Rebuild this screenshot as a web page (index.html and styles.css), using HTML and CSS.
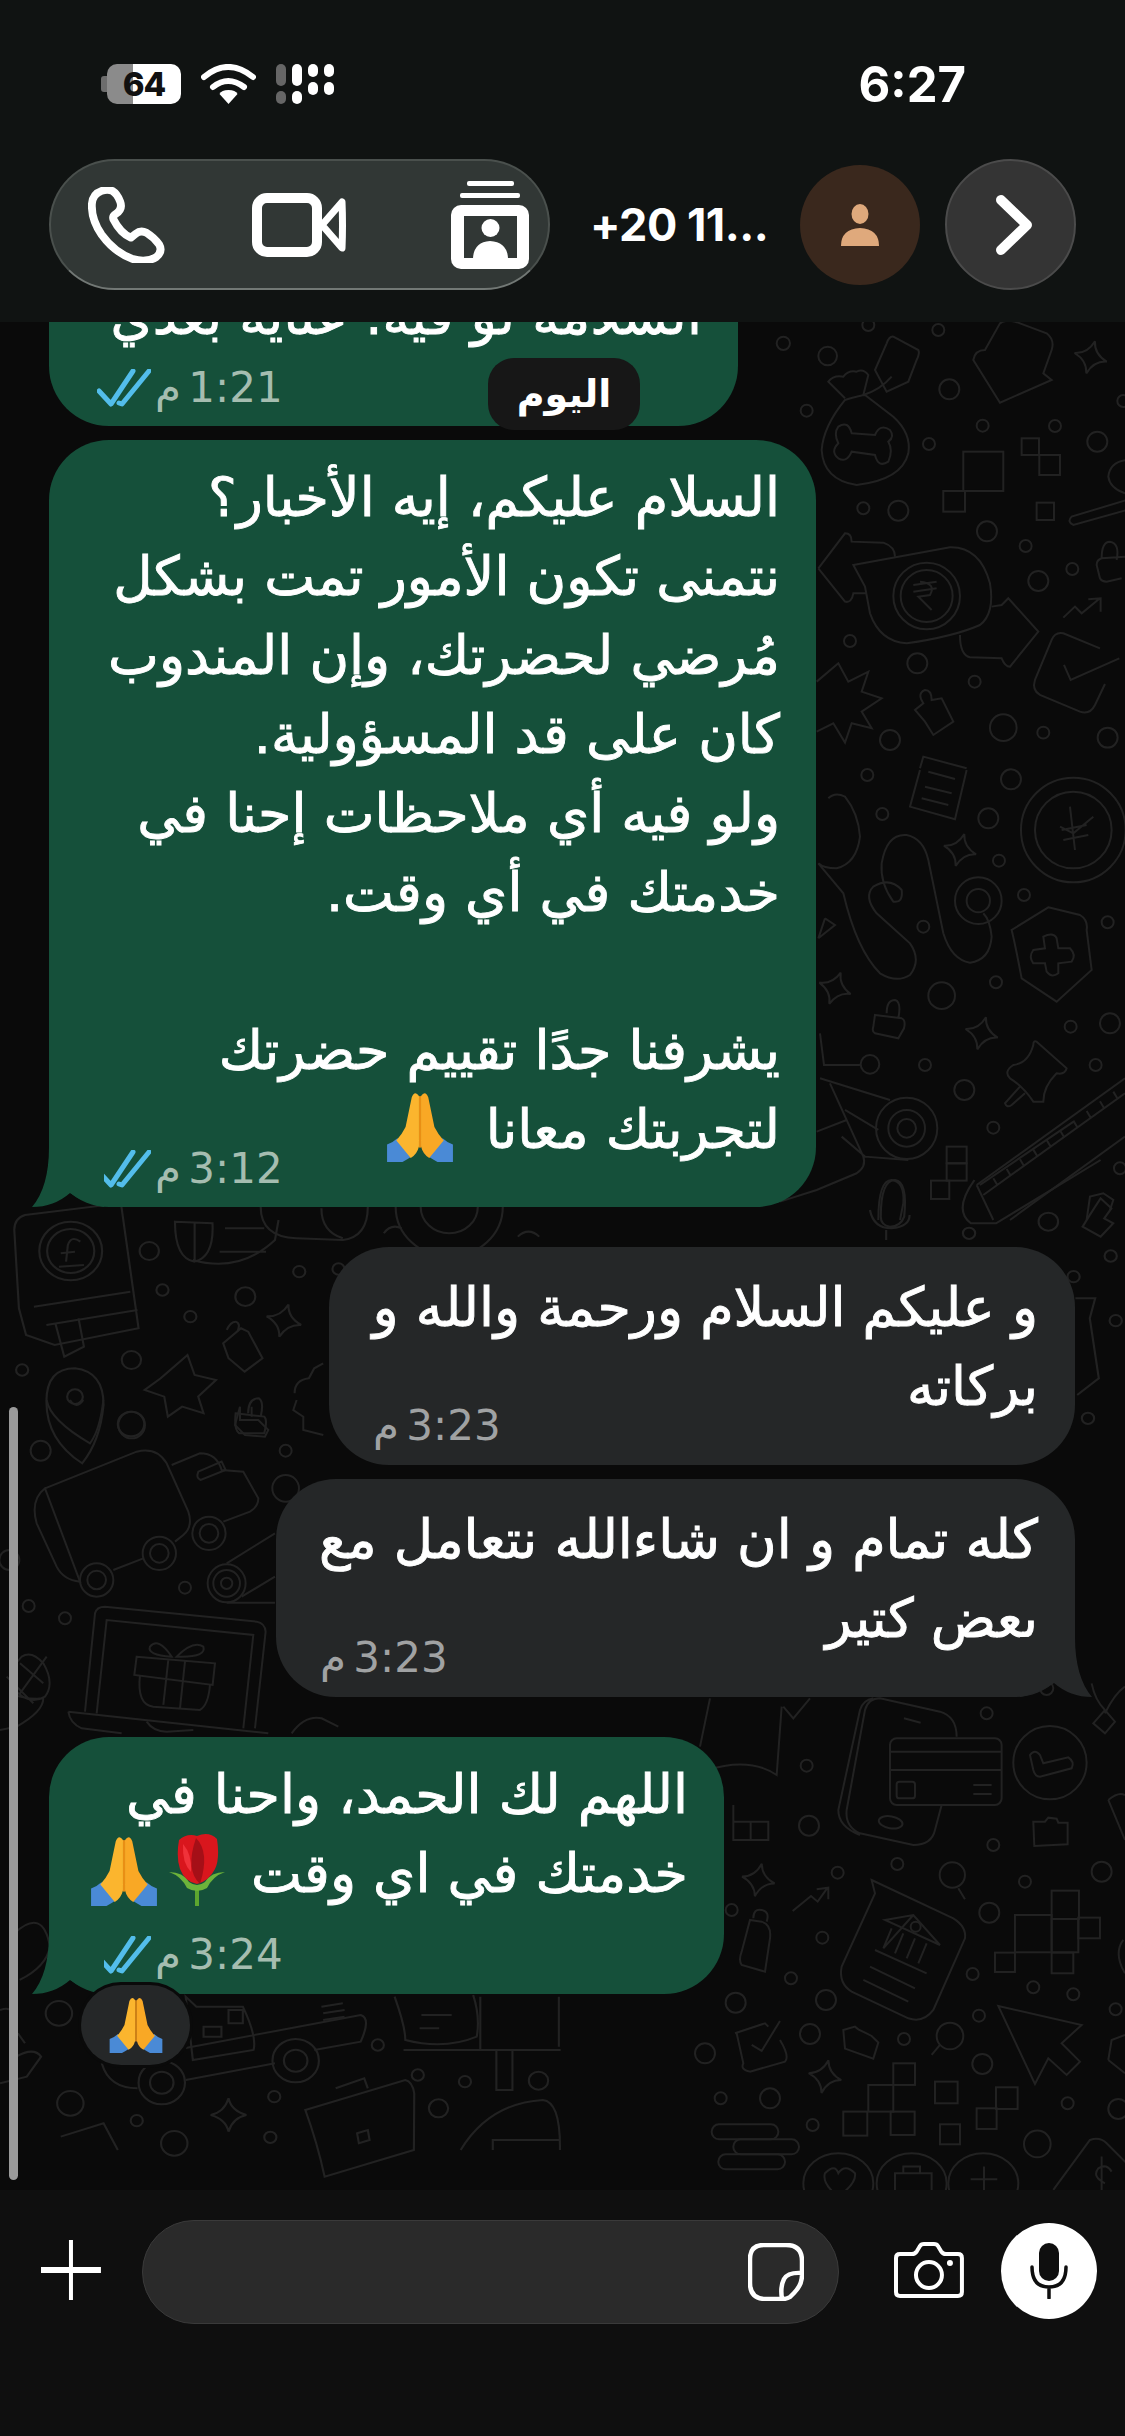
FILE: index.html
```html
<!doctype html>
<html lang="ar">
  <head>
    <meta charset="UTF-8" />
    <meta name="viewport" content="width=device-width, initial-scale=1.0" />
    <title>WhatsApp chat</title>
    <link rel="stylesheet" href="styles.css">
  </head>
  <body>
    <svg class="defs" width="0" height="0">
      <defs>
        <symbol id="pray" viewBox="0 0 64 68">
          <path fill="#4a8ad6" d="M0 68V51q6-2 10-6l15 17q-6 4-10 6z" />
          <path fill="#4a8ad6" d="M64 68V51q-6-2-10-6L39 62q6 4 10 6z" />
          <path fill="#fbb52e" d="M31 4q-4-6-7 1l-6 29q-4 8-9 13l14 17q6-3 8-11z" />
          <path fill="#f9a825" d="M33 4q4-6 7 1l6 29q4 8 9 13L41 64q-6-3-8-11z" />
          <path fill="#e98f14" d="M31 4h2v50h-2z" />
        </symbol>
        <symbol id="rose" viewBox="0 0 56 72">
          <path fill="#5da52f" d="M26 52h4v20h-4z" />
          <path fill="#6cb33a" d="M0 38q14 0 20 10 8 6 16 0 6-10 20-10-12 4-18 16-10 6-20 0Q12 42 0 38z" />
          <path fill="#d9161d" d="M10 6q8-7 18-4 12-5 20 3 3 20-2 30-6 12-18 15-12-2-17-15-4-12-1-29z" />
          <path fill="#a50f17" d="M27 4q14 14 4 46-15-14-4-46z" />
          <path fill="#f0323a" d="M14 10q9 10 8 28-9-9-8-28z" />
        </symbol>
        <symbol id="ticks" viewBox="0 0 54 38">
          <path fill="none" stroke="#53bdeb" stroke-width="5" stroke-linecap="round" stroke-linejoin="round" d="M2 22l12 13L36 2M22 34l3 1L52 2" />
        </symbol>
        <path id="spark" d="M0-50Q8-12 50 0 12 8 0 50-8 12-50 0-12-8 0-50z" />
      </defs>
    </svg>

    <header class="top-bar">
      <div class="status-row">
        <div class="status-icons">
          <div class="battery"><span class="battery-level">64</span></div>
          <svg class="wifi" viewBox="0 0 55 40">
            <path fill="none" stroke="#fff" stroke-width="6" stroke-linecap="round" d="M3 13q24-20 49 0M12 23q15-12 31 0" />
            <path fill="#fff" d="M27.500 26q7 0 9 4l-9 10-9-10q2-4 9-4z" />
          </svg>
          <div class="signal">
            <span class="signal-col"><i class="tall dim"></i><i class="dim"></i></span>
            <span class="signal-col"><i class="tall"></i><i></i></span>
            <span class="signal-col"><i></i><i></i></span>
            <span class="signal-col"><i></i><i></i></span>
          </div>
        </div>
        <div class="clock">6:27</div>
      </div>

      <div class="nav-row">
        <div class="call-pill">
          <svg class="icon-phone" viewBox="0 0 80 78">
            <path fill="none" stroke="#fff" stroke-width="8" stroke-linejoin="round" d="M14 4Q5 7 4 17q-1 16 10 32 13 18 32 25 14 4 24-2 7-6 3-13-5-7-13-12-6-3-11 1l-5 4Q33 47 26 33q-1-3 2-5 8-5 5-13-3-8-8-11-5-2-11 0z" />
          </svg>
          <svg class="icon-video" viewBox="0 0 94 64">
            <rect x="5" y="5" width="60" height="54" rx="10" fill="none" stroke="#fff" stroke-width="10" />
            <path fill="none" stroke="#fff" stroke-width="7" stroke-linejoin="round" d="M70 32 90 9q1 23 0 46z" />
          </svg>
          <svg class="icon-contact" viewBox="0 0 78 88">
            <rect x="16" y="0" width="47" height="5" rx="2" fill="#fff" />
            <rect x="9" y="12" width="60" height="5" rx="2" fill="#fff" />
            <rect x="0" y="24" width="78" height="64" rx="10" fill="#fff" />
            <rect x="13" y="35" width="53" height="42" fill="#313735" />
            <circle cx="39.500" cy="47" r="9" fill="#fff" />
            <path fill="#fff" d="M22 77q1-16 17-17 17 1 18 17z" />
          </svg>
        </div>
        <div class="contact-name">+20 11...</div>
        <div class="avatar">
          <svg viewBox="0 0 38 42" class="avatar-person">
            <ellipse cx="19" cy="10" rx="8.500" ry="10" fill="#dfa97c" />
            <path fill="#dfa97c" d="M0 42q0-17 19-18 19 1 19 18z" />
          </svg>
        </div>
        <div class="round-btn">
          <svg viewBox="0 0 40 62" class="chevron">
            <path fill="none" stroke="#fff" stroke-width="10" stroke-linecap="round" stroke-linejoin="round" d="M7 6l26 25L7 56" />
          </svg>
        </div>
      </div>
    </header>

    <main class="chat">
      <svg class="wallpaper" viewBox="0 322 1125 1868" fill="none" stroke="#222" stroke-width="2">
        <!-- top right -->
        <g transform="translate(780 320) scale(.3333)" stroke-width="6">
          <circle cx="143" cy="108" r="28" /><circle cx="80" cy="272" r="18" /><circle cx="508" cy="208" r="30" /><circle cx="475" cy="30" r="18" /><circle cx="608" cy="317" r="18" /><circle cx="825" cy="318" r="18" /><circle cx="952" cy="365" r="30" /><circle cx="447" cy="372" r="18" /><circle cx="250" cy="565" r="18" /><circle cx="355" cy="572" r="30" /><circle cx="621" cy="634" r="30" /><circle cx="737" cy="678" r="18" /><circle cx="877" cy="747" r="18" /><circle cx="775" cy="783" r="30" /><circle cx="210" cy="963" r="18" /><circle cx="412" cy="1030" r="30" /><circle cx="584" cy="1085" r="18" /><circle cx="670" cy="1223" r="40" /><circle cx="790" cy="1238" r="18" /><circle cx="983" cy="1253" r="30" /><circle cx="330" cy="1260" r="30" /><circle cx="265" cy="15" r="18" /><circle cx="1030" cy="243" r="18" /><circle cx="10" cy="70" r="20" />
          <path d="M340 50l75 40q5 10-5 30l-25 65-65 30-35-65 35-80q8-22 20-20zM335 170q-35 40-85 55" />
          <path d="M195 240q50-15 60-15l85 65q55 50 45 110-20 80-155 95-100-15-105-105 5-70 70-150zM195 235l-50-50q15-20 45-15 15-20 40-15 20-10 35 10l-15 60" />
          <path d="M215 340l70 5q15-35 45-15 15 20-5 35 15 25 0 60-30 20-40-20l-70-10q-15 35-40 20-25-20 0-45-15-30 0-50 30-20 40 20z" />
          <path d="M660 10q20-15 60 0l80 30q25 20 15 50l-25 70 25 20-155 68-80-128q5-30 35-30z" />
          <use href="#spark" transform="translate(932 112) rotate(15)" />
          <rect x="550" y="395" width="120" height="118" /><rect x="490" y="513" width="65" height="62" /><rect x="725" y="355" width="52" height="50" /><rect x="778" y="405" width="62" height="60" /><rect x="770" y="548" width="52" height="52" />
          <path d="M1040 420q-50 5-55 50 5 35 50 50M1040 540l-165 50q-15 15 5 25l160-45" />
          <path d="M965 715q0-50 25-50 30 5 20 55M1035 710l-70 5q-15 5-15 20l10 40q5 10 20 10l45-10" />
          <path d="M220 735l290-53q90-2 120 108 15 90-30 125-80 35-220 55-80-5-110-90l-15-80z" />
          <circle cx="440" cy="828" r="100" /><circle cx="440" cy="828" r="78" />
          <path d="M400 795l70-10M400 815l70-10M420 785q50 5 30 40l-35 5 40 40" />
          <path d="M115 745l80-105q20 0 20 25l95 3q35 12 35 42M115 745l80 100q20 5 25-25h40" />
          <path d="M635 860l30-5 20-20 90 100-85 105q-15 0-25-25l-95-3q-30-7-30-67" />
          <path d="M850 893l35-33 20 20 55-45M925 838l37-3v40" />
          <path d="M960 985l-110-45q-25-5-35 20l-50 120q-10 30 15 45l120 50q30 10 45-20l30-63M852 1035l20 45 146-65" />
          <path d="M110 1085l65-55 30 55 60-30-20 60 60 20-60 40 30 50-60-15-20 58-35-58-50 25" />
          <path d="M430 1150q-20-30 5-40 20 0 20 30l30-5 35 70-60 40-25-40-30-35z" />
          <path d="M420 1345l10-35 130 35" />
        </g>

        <!-- middle right -->
        <g transform="translate(780 770) scale(.3333)" stroke-width="6">
          <circle cx="262" cy="15" r="18" /><circle cx="693" cy="28" r="30" /><circle cx="307" cy="132" r="18" /><circle cx="625" cy="145" r="30" /><circle cx="657" cy="272" r="18" /><circle cx="732" cy="375" r="18" /><circle cx="430" cy="470" r="18" /><circle cx="983" cy="457" r="18" /><circle cx="648" cy="637" r="18" /><circle cx="485" cy="677" r="40" /><circle cx="872" cy="770" r="18" /><circle cx="990" cy="760" r="30" /><circle cx="435" cy="885" r="18" /><circle cx="947" cy="885" r="18" /><circle cx="553" cy="960" r="30" /><circle cx="640" cy="1073" r="18" /><circle cx="1020" cy="1195" r="18" />
          <path d="M420 0l-30 110 135 38 35-148M445 5l80 22M435 50l80 20M425 85l80 20" />
          <path d="M145 85q20-20 50-5 40 50 45 120-10 80-70 95-40 0-55-15l75 90q40 170 110 240 50 30 90 5 35-45 0-95l-100-90q-40-50-10-80 50-30 85 10 5 40-25 35-40-55-35-115 15-90 75-85 50 10 65 75l45 220q25 80 80 88 60-8 65-78-5-50-25-70" />
          <circle cx="595" cy="392" r="70" /><circle cx="595" cy="392" r="35" />
          <use href="#spark" transform="translate(540 240) rotate(15)" />
          <use href="#spark" transform="translate(165 655) rotate(20)" />
          <use href="#spark" transform="translate(605 790) rotate(15)" />
          <circle cx="880" cy="180" r="157" /><circle cx="880" cy="180" r="115" />
          <path d="M870 110l15 130M940 140l-60 50-40-20M845 180l75-15M850 210l75-15" />
          <path d="M805 412l95 23q25 15 20 45l15 120-105 95-105-70q-20-105-30-145z" />
          <path d="M790 500q30-15 40 5l5 30h35q20 20 5 40l-40 5v30q-20 15-35-5l-5-25h-35q-15-20 0-40l35-5z" />
          <path d="M285 735l80 10q13 5 7 30l-17 30-70-15q-10-5-5-20zM320 730q0-40 25-40 20 5 10 55" />
          <path d="M770 815l90 80q-5 20-30 15-40 40-40 85h-30q-30-45-70-70-20-20 10-40 45-5 60-60 0-15 10-10zM720 950l-45 50q5 15 20 5l40-35" />
          <path d="M590 1245l445-320M610 1275l425-305M590 1245l50 105M690 1350l345-250M640 1225l12 20M680 1197l12 20M720 1168l12 20M760 1139l12 20M800 1110l12 20M840 1081l12 20M880 1052l12 20M920 1023l12 20M960 994l12 20M1000 965l12 20" />
          <circle cx="380" cy="1075" r="92" /><circle cx="380" cy="1075" r="55" /><circle cx="380" cy="1075" r="28" />
          <path d="M120 925l210 65M150 940l100 220q10 30-20 50l-120 50-110 35M110 1085l90-35M195 1020l100 60M185 1100l70 60 130 10" />
          <rect x="500" y="1130" width="60" height="50" /><rect x="500" y="1180" width="60" height="52" /><rect x="453" y="1232" width="55" height="55" />
          <path d="M120 790l12 95h108" /><circle cx="270" cy="883" r="28" />
          <path d="M135 445l30 20-50 40M135 445l-20 60" />
          <path d="M295 1350q0-120 40-120 40 5 35 70l-10 50" />
          <path d="M920 1350l10-70 40-10 30 20-10 30" />
        </g>

        <!-- right of incoming -->
        <g transform="translate(560 1150) scale(.3604 .3333)" stroke-width="6">
          <path d="M1150 90q-60 90-10 130l70 0 290-190M1165 105l260-190" />
          <path d="M890 200q0-110 40-110 35 5 25 110-10 30-40 30-25-5-25-30zM860 180q10 55 60 55 50-5 50-40M905 240v30" />
          <path d="M1470 195l30-50 30 30-20 30 25 15-35 40-50-30z" />
          <circle cx="1355" cy="215" r="27" /><circle cx="1135" cy="250" r="17" /><circle cx="1528" cy="318" r="17" /><circle cx="1542" cy="512" r="17" /><circle cx="1465" cy="805" r="17" /><circle cx="1425" cy="380" r="17" />
          <path d="M1430 445l55 0-15 60 25 180-60 50" />
        </g>

        <!-- lower right -->
        <g transform="translate(700 1680) scale(.3333)" stroke-width="6">
          <circle cx="320" cy="257" r="18" /><circle cx="327" cy="437" r="30" /><circle cx="860" cy="100" r="18" /><circle cx="880" cy="495" r="18" /><circle cx="592" cy="552" r="18" /><circle cx="413" cy="578" r="18" /><circle cx="975" cy="605" r="18" /><circle cx="1205" cy="575" r="30" /><circle cx="868" cy="698" r="30" /><circle cx="95" cy="690" r="18" /><circle cx="367" cy="773" r="18" /><circle cx="818" cy="882" r="18" /><circle cx="273" cy="895" r="18" /><circle cx="378" cy="960" r="30" /><circle cx="107" cy="968" r="30" /><circle cx="1000" cy="922" r="18" /><circle cx="1120" cy="943" r="18" /><circle cx="1247" cy="988" r="18" /><circle cx="837" cy="1007" r="18" /><circle cx="330" cy="1062" r="30" /><circle cx="612" cy="1077" r="18" /><circle cx="847" cy="1152" r="30" /><circle cx="62" cy="1255" r="18" /><circle cx="210" cy="1255" r="30" /><circle cx="338" cy="1335" r="18" /><circle cx="1103" cy="1270" r="18" /><circle cx="1255" cy="1287" r="30" /><circle cx="1012" cy="1392" r="40" />
          <rect x="570" y="175" width="335" height="200" rx="20" />
          <rect x="590" y="305" width="55" height="50" rx="8" />
          <path d="M572 215h332M572 270h332M820 315h55M820 342h55" />
          <path d="M770 170q0-60-50-75L540 55q-35 0-45 35l-55 300q-5 50 40 70l160 35q55 0 65-45l20-75M520 55q-30 5-40 35l-65 300q0 50 65 75M612 115l50 13" />
          <ellipse cx="572" cy="427" rx="36" ry="18" transform="rotate(10 572 427)" />
          <circle cx="1050" cy="248" r="110" />
          <path d="M990 225q15-20 30 0l10 25 75-18q20 13 10 33l-95 25q-15 0-20-20z" />
          <path d="M1000 425l35 0 10-12 25 3 5 12 28 0 0 65-100 5z" />
          <path d="M430 1050l35-10 10 8 40 20 20 20-15 48-85-30z" />
          <path d="M515 600l245 115q40 25 35 60L700 990q-30 40-75 25L455 935q-40-25-30-75l100-220z" />
          <path d="M555 720l85-15 80 90zM640 705l-90 100M575 745l-25 60M610 760l-25 60M645 775l-25 60M680 790l-25 60M525 810l155 70M510 860l135 65M490 900l135 65" />
          <circle cx="647" cy="740" r="15" />
          <circle cx="757" cy="585" r="38" /><path d="M775 625l20 33" />
          <circle cx="750" cy="1068" r="40" /><path d="M720 1095l-25 30" />
          <path d="M895 978l250 57-60 55 55 55-40 40-55-50-40 77z" />
          <rect x="1055" y="632" width="82" height="85" /><rect x="945" y="705" width="110" height="112" /><rect x="1055" y="717" width="80" height="100" /><rect x="1135" y="713" width="65" height="62" /><rect x="885" y="818" width="60" height="58" /><rect x="1055" y="818" width="65" height="62" />
          <rect x="580" y="1150" width="65" height="65" /><rect x="505" y="1215" width="75" height="80" /><rect x="430" y="1295" width="72" height="72" /><rect x="572" y="1295" width="72" height="70" /><rect x="705" y="1205" width="68" height="65" /><rect x="720" y="1333" width="60" height="60" /><rect x="888" y="1222" width="65" height="65" /><rect x="830" y="1285" width="60" height="62" />
          <rect x="35" y="1333" width="200" height="45" rx="22" /><rect x="100" y="1378" width="197" height="45" rx="22" /><rect x="55" y="1423" width="200" height="45" rx="22" />
          <use href="#spark" transform="translate(175 600) rotate(12)" />
          <use href="#spark" transform="translate(375 1190) rotate(12)" />
          <path d="M278 693l55-45 20 17 30-42M350 628l35-5v35" />
          <path d="M150 720l35 5q30 10 25 50l-15 100-70-20q-10-15 0-40z M160 715q0-30 25-25 25 5 15 35" />
          <path d="M105 1060l90-30 10 10M240 1080q30 50 15 65l-105 30q-30-5-20-25l-20-90M155 1095l30 18 55-90" />
          <path d="M30 55L0 200M250 80l30 35 50-60M245 80l-15 205Q150 230 20 270" />
          <path d="M100 375v50h105v55H100v-55M152 425v55" />
          <ellipse cx="415" cy="1510" rx="105" ry="90" /><ellipse cx="635" cy="1510" rx="105" ry="90" /><ellipse cx="850" cy="1510" rx="105" ry="90" />
          <path d="M375 1480q30-30 40 0 20-30 50 0 5 30-50 70-50-40-40-70zM585 1530v-50h110v50M610 1480v-20h50v20M812 1498h80M852 1460v70" />
          <path d="M1060 1530l110-150q30-10 50 10l60 60M1205 1430v100M1235 1475q-15-25-40-10-20 25 20 45" />
          <path d="M1180 130l35-40 30 35-30 35zM1215 100q30-60 60-80M1175 10q10 50 40 80" />
          <path d="M1225 360q30-25 50-15M1225 360l50 120" />
          <path d="M1270 780q-30 40 5 100" />
          <path d="M1225 1140l10-60 40-15M1225 1140l50 40" />
          <circle cx="15" cy="1120" r="30" />
          <circle cx="1040" cy="25" r="20" />
        </g>

        <!-- left of incoming -->
        <g transform="translate(0 1400) scale(.3333)" stroke-width="6">
          <circle cx="122" cy="152" r="30" /><circle cx="395" cy="75" r="40" /><circle cx="28" cy="480" r="30" /><circle cx="555" cy="563" r="18" /><circle cx="86" cy="618" r="18" /><circle cx="195" cy="655" r="18" /><circle cx="857" cy="152" r="18" /><circle cx="857" cy="265" r="40" />
          <path d="M135 265l275-110q60-15 90 35l65 145q15 45-15 70l-25 20M340 510l90-35M240 545q-50-5-70-45L110 370q-20-70 25-105z" />
          <path d="M515 195l85-35q50 0 65 50l65 5 45 80q0 25-25 40l-80 30" />
          <path d="M595 215l70-30 12 25-75 30q-15-5-7-25z" />
          <circle cx="290" cy="540" r="50" /><circle cx="290" cy="540" r="28" /><circle cx="478" cy="460" r="50" /><circle cx="478" cy="460" r="28" /><circle cx="627" cy="400" r="50" /><circle cx="627" cy="400" r="28" />
          <circle cx="680" cy="550" r="57" /><circle cx="680" cy="550" r="40" /><circle cx="680" cy="550" r="17" />
          <path d="M680 490l145-90M725 590l100-60M680 608h145" />
          <path d="M255 935l30-295q5-20 30-20l455 45q25 5 27 30l-32 290M290 940l30-280 440 45-30 280M205 935l600 65M205 935q5 35 40 50l120 15M440 965q20 30 60 30l80-5" />
          <path d="M410 770l235 20-7 65-235-30zM420 825q-10 90 40 95l140 10q25-15 30-75M505 780l-15 135M555 785l-15 140" />
          <path d="M515 770q-40-60-65-30-10 25 65 30zM530 770q50-50 80-30 10 30-65 30z" />
          <path d="M130 790q-35-40-65-20-40 40-30 90 50 60 100 30 30-40-5-100zM30 880q50 20 100 15 0 40-80 85l-50 10M60 790l70 60M20 830l80 80M140 770l-80 110" />
          <path d="M140 0q10 60 130 130 30-40 40-130M210 0q20 30 40 0" />
          <path d="M720 20v40l55 0 30 30-10 20-60-5-30-30zM755 20v30" />
          <path d="M890 0l-10 30 30 20 0 40 60 15M875 1000q40-55 90-45l50 25" />
        </g>

        <!-- under first outgoing -->
        <g transform="translate(0 1050) scale(.3571 .3333)" stroke-width="6">
          <path d="M40 540q0-35 30-45l305-40 45-40M340 470l48 365-235 50-80-30-20-80L40 540M95 770l270-45M130 825l255-45" />
          <path d="M155 820l25 100 55-30-15-85" />
          <circle cx="198" cy="603" r="88" /><circle cx="198" cy="603" r="66" />
          <path d="M165 650l70-5M225 575q-25-20-35 10l-5 50M170 610l40-5" />
          <circle cx="418" cy="603" r="27" /><circle cx="455" cy="720" r="17" /><circle cx="838" cy="665" r="17" /><circle cx="687" cy="740" r="28" /><circle cx="533" cy="800" r="17" /><circle cx="368" cy="930" r="27" /><circle cx="62" cy="960" r="17" /><circle cx="367" cy="1122" r="37" /><circle cx="210" cy="1040" r="22" /><circle cx="948" cy="657" r="17" />
          <path d="M490 515l105 5q5 100-50 115-55-10-55-120zM545 515v115M630 535h110M615 605h130M540 630q130 40 230-60l10-60" />
          <path d="M730 470q0 90 100 95l130 5q70-10 70-100M900 475q0 70 60 90" />
          <circle cx="1258" cy="470" r="150" /><circle cx="1258" cy="470" r="80" />
          <path d="M450 985l75-70 20 60 60 15-50 50 15 50-60-20-40 30-10-60-55-20z" />
          <use href="#spark" transform="translate(795 812) rotate(15) scale(1)" />
          <path d="M130 1055q0-100 80-100 80 10 80 110-10 110-60 175-100-70-100-185z" />
          <path d="M660 1090l80 10q10 10 0 50l-70 0q-15-10-10-60zM695 1090q0-45 30-45 15 10 5 55" />
          <path d="M625 880l50-45 20 10 40 80-50 40-45-40zM635 840q10-25 25-25 15 5 5 30" />
          <path d="M825 1030q0-40 40-45l15-30 25-15" />
          <path d="M1075 550q20-30 50-15M1450 560q30-30 60 0" />
        </g>

        <!-- below last message -->
        <g transform="translate(0 1850) scale(.3571 .3333)" stroke-width="6">
          <circle cx="165" cy="490" r="37" /><circle cx="197" cy="760" r="37" /><circle cx="768" cy="740" r="17" /><circle cx="383" cy="812" r="17" /><circle cx="757" cy="862" r="17" /><circle cx="1058" cy="585" r="17" /><circle cx="1170" cy="675" r="17" /><circle cx="1302" cy="695" r="17" /><circle cx="1508" cy="692" r="27" /><circle cx="1228" cy="775" r="27" /><circle cx="488" cy="880" r="37" />
          <path d="M285 640q20 75 100 75M490 600l520-105q30 10 0 80l-130 25M520 690l250-50" />
          <circle cx="453" cy="698" r="65" /><circle cx="453" cy="698" r="33" />
          <circle cx="828" cy="632" r="65" /><circle cx="828" cy="632" r="33" />
          <path d="M520 440l30 30h130q40 90 30 130l-170 30zM570 530h50v30h-50zM640 480h40v40h-40z" />
          <path d="M900 470l60-10M905 490l60-10M905 510l60-10" />
          <path d="M1105 440q30 90 30 130 110 30 200-10 10-60-10-125M1180 495h85M1175 535h55M1130 600h440M1345 440v160M1390 600v120h45V600M1565 440v150" />
          <use href="#spark" transform="translate(640 795) scale(1)" />
          <path d="M855 780l280-90q20 5 25 40l-1 170-250 80q-20-100-54-200zM940 715l80-30 10 30M1000 850l30-10 5 30-30 10z" />
          <path d="M170 860l120-40 40 80M1290 900q80-140 230-150 50 5 48 150M1380 900V870h188" />
          <path d="M0 480q50-20 30 60M45 620q50-30 70 0l-40 60-75 20M50 550l20 30" />
          <path d="M40 250q80-80 100 40-10 60-85 100" />
        </g>
      </svg>

      <div class="date-pill">اليوم</div>

      <div class="messages">
        <article class="msg msg-out msg-clipped">
          <div class="msg-text">السلامة لو فيه. عناية بعدي</div>
          <div class="msg-meta"><svg class="ticks"><use href="#ticks" /></svg><span dir="rtl">1:21 م</span></div>
        </article>

        <article class="msg msg-out msg-long tail-left">
          <div class="msg-text">السلام عليكم، إيه الأخبار؟<br>نتمنى تكون الأمور تمت بشكل<br>مُرضي لحضرتك، وإن المندوب<br>كان على قد المسؤولية.<br>ولو فيه أي ملاحظات إحنا في<br>خدمتك في أي وقت.<br><br>يشرفنا جدًا تقييم حضرتك<br>لتجربتك معانا <svg class="emoji emoji-far"><use href="#pray" /></svg></div>
          <div class="msg-meta"><svg class="ticks"><use href="#ticks" /></svg><span dir="rtl">3:12 م</span></div>
        </article>

        <article class="msg msg-in msg-salam">
          <div class="msg-text">و عليكم السلام ورحمة والله و<br>بركاته</div>
          <div class="msg-meta"><span dir="rtl">3:23 م</span></div>
        </article>

        <article class="msg msg-in msg-ok tail-right">
          <div class="msg-text">كله تمام و ان شاءالله نتعامل مع<br>بعض كتير</div>
          <div class="msg-meta"><span dir="rtl">3:23 م</span></div>
        </article>

        <article class="msg msg-out msg-thanks tail-left">
          <div class="msg-text">اللهم لك الحمد، واحنا في<br>خدمتك في اي وقت <svg class="emoji emoji-rose"><use href="#rose" /></svg><svg class="emoji"><use href="#pray" /></svg></div>
          <div class="msg-meta"><svg class="ticks"><use href="#ticks" /></svg><span dir="rtl">3:24 م</span></div>
          <div class="reaction"><svg class="reaction-emoji"><use href="#pray" /></svg></div>
        </article>
      </div>

      <div class="scrollbar"></div>
    </main>

    <footer class="composer">
      <svg class="icon-plus" viewBox="0 0 60 60">
        <path fill="#fff" d="M28 0h4v27h28v6H32v27h-4V33H0v-6h28z" />
      </svg>
      <div class="input-box">
        <svg class="icon-sticker" viewBox="0 0 56 58">
          <path fill="none" stroke="#fff" stroke-width="4.500" stroke-linejoin="round" d="M16 2h22q16 0 16 16v14Q54 42 46 50l-4 4q-3 2-8 2H18Q2 56 2 40V16Q2 2 16 2zM54 30q-14-1-18 6-4 8-2 20" />
        </svg>
      </div>
      <svg class="icon-camera" viewBox="0 0 70 56">
        <path fill="none" stroke="#fff" stroke-width="4" stroke-linejoin="round" d="M6 12h12q3 0 5-3l3-5q1-2 4-2h10q3 0 4 2l3 5q2 3 5 3h12q4 0 4 4v34q0 4-4 4H6q-4 0-4-4V16q0-4 4-4z" />
        <circle cx="35" cy="33" r="13" fill="none" stroke="#fff" stroke-width="4" />
        <circle cx="56" cy="21" r="3" fill="#fff" />
      </svg>
      <div class="mic-btn">
        <svg viewBox="0 0 38 56" class="icon-mic">
          <rect x="9" y="0" width="20" height="38" rx="10" fill="#0f0f0f" />
          <path fill="none" stroke="#0f0f0f" stroke-width="3.500" stroke-linecap="round" d="M2 24q0 20 17 20 17 0 17-20M19 44v11" />
        </svg>
      </div>
    </footer>
  </body>
</html>
```

FILE: styles.css
```css
* {
  box-sizing: border-box;
}
html,
body {
  margin: 0;
  height: 100%;
}
body {
  width: 1125px;
  height: 2436px;
  display: flex;
  flex-direction: column;
  overflow: hidden;
  background-color: #0a0a0a;
  color: #fff;
  font-family: Inter, "Noto Sans", "DejaVu Sans", sans-serif;
}
.defs {
  position: absolute;
}

/* header */
.top-bar {
  height: 322px;
  flex-shrink: 0;
  padding: 63px 49px 0;
  background-color: #101312;
}
.status-row {
  display: flex;
  justify-content: space-between;
  align-items: center;
  padding: 0 110px 0 49px;
  height: 42px;
}
.status-icons {
  display: flex;
  align-items: center;
  gap: 20px;
}
.battery {
  position: relative;
  width: 74px;
  height: 40px;
  margin-left: 9px;
  border-radius: 10px;
  background: linear-gradient(90deg, #8b8b8b 0 35%, #fff 35% 100%);
  display: flex;
  justify-content: center;
  align-items: center;
}
.battery::before {
  content: "";
  position: absolute;
  left: -6px;
  top: 12px;
  width: 6px;
  height: 16px;
  border-radius: 3px 0 0 3px;
  background-color: #6d6d6d;
}
.battery-level {
  color: #111;
  font-size: 33px;
  font-weight: 800;
  letter-spacing: -1px;
}
.wifi {
  width: 55px;
  height: 40px;
}
.signal {
  display: flex;
  gap: 6px;
}
.signal-col {
  display: flex;
  flex-direction: column;
  gap: 5px;
}
.signal-col i {
  display: block;
  width: 10px;
  height: 13px;
  border-radius: 5px;
  background-color: #fff;
}
.signal-col i.tall {
  height: 22px;
}
.signal-col i.dim {
  background-color: #666;
}
.clock {
  font-size: 49px;
  font-weight: 700;
}
.nav-row {
  display: flex;
  align-items: center;
  margin-top: 54px;
}
.call-pill {
  width: 501px;
  height: 131px;
  padding: 0 0 0 37px;
  display: flex;
  align-items: center;
  border-radius: 66px;
  background-color: #313735;
  border: 2px solid #4a504d;
  border-bottom-color: #727875;
}
.icon-phone {
  width: 78px;
  height: 76px;
}
.icon-video {
  width: 94px;
  height: 64px;
  margin-left: 86px;
}
.icon-contact {
  width: 78px;
  height: 88px;
  margin-left: 105px;
}
.contact-name {
  margin-left: 40px;
  width: 210px;
  font-size: 45px;
  font-weight: 700;
  letter-spacing: -.5px;
  white-space: nowrap;
}
.avatar {
  width: 120px;
  height: 120px;
  border-radius: 50%;
  background-color: #3a281d;
  display: flex;
  justify-content: center;
  align-items: center;
}
.avatar-person {
  width: 38px;
  height: 42px;
}
.round-btn {
  width: 131px;
  height: 131px;
  margin-left: 25px;
  border-radius: 50%;
  background-color: #343434;
  border: 2px solid #4b4b4b;
  display: flex;
  justify-content: center;
  align-items: center;
}
.chevron {
  width: 40px;
  height: 62px;
  margin-left: 6px;
}

/* chat */
.chat {
  position: relative;
  flex: 1;
  overflow: hidden;
}
.wallpaper {
  position: absolute;
  inset: 0;
  width: 100%;
  height: 100%;
}
.date-pill {
  position: absolute;
  z-index: 2;
  top: 36px;
  left: 488px;
  width: 152px;
  height: 72px;
  border-radius: 26px;
  background-color: #171717;
  display: flex;
  justify-content: center;
  align-items: center;
  font-family: "DejaVu Sans", sans-serif;
  font-size: 38px;
  font-weight: 700;
}
.messages {
  position: relative;
  display: flex;
  flex-direction: column;
}
.msg {
  position: relative;
  direction: rtl;
  border-radius: 60px;
  font-family: "DejaVu Sans", sans-serif;
  font-size: 54px;
  line-height: 79px;
  -webkit-text-stroke: .9px #fff;
}
.msg-out {
  align-self: flex-start;
  margin-left: 49px;
  padding: 18px 36px 18px 48px;
  background-color: #15503a;
}
.msg-in {
  align-self: flex-end;
  margin-right: 50px;
  padding: 21px 37px 19px 44px;
  background-color: #252728;
}
.msg-clipped {
  width: 689px;
  height: 182px;
  margin-top: -78px;
  padding-top: 32px;
}
.msg-long {
  width: 767px;
  margin-top: 14px;
}
.msg-salam {
  width: 746px;
  margin-top: 40px;
}
.msg-ok {
  width: 799px;
  margin-top: 14px;
}
.msg-thanks {
  width: 675px;
  margin-top: 40px;
  padding-bottom: 19px;
}
.msg-text {
  white-space: nowrap;
}
.msg-meta {
  direction: ltr;
  height: 40px;
  margin-top: -20px;
  display: flex;
  align-items: center;
  gap: 4px;
  font-size: 42px;
  line-height: 40px;
  word-spacing: -6px;
  -webkit-text-stroke: 0;
}
.msg-out .msg-meta {
  color: #a5bdb0;
}
.msg-in .msg-meta {
  color: #a0a2a3;
}
.msg-thanks .msg-meta {
  margin-top: 22px;
}
.msg-clipped .msg-meta {
  margin-top: 13px;
}
.ticks {
  width: 54px;
  height: 38px;
}
.emoji {
  width: 66px;
  height: 70px;
  vertical-align: -14px;
}
.emoji-far {
  margin-right: 16px;
}
.emoji-rose {
  width: 56px;
  height: 72px;
  margin: 0 9px 0 12px;
}
.tail-left::before,
.tail-right::before {
  content: "";
  position: absolute;
  bottom: 0;
  width: 72px;
  height: 60px;
  background-color: inherit;
}
.tail-left::before {
  left: -17px;
  clip-path: path("M17 0Q17 40 0 60Q22 60 38 46Q52 56 72 60L72 0Z");
}
.tail-right::before {
  right: -17px;
  clip-path: path("M55 0Q55 40 72 60Q50 60 34 46Q20 56 0 60L0 0Z");
}
.reaction {
  position: absolute;
  left: 32px;
  bottom: -71px;
  width: 109px;
  height: 80px;
  border-radius: 40px;
  background-color: #252728;
  box-shadow: 0 0 0 3px #0a0a0a;
  display: flex;
  justify-content: center;
  align-items: center;
}
.reaction-emoji {
  width: 56px;
  height: 56px;
}
.scrollbar {
  position: absolute;
  left: 9px;
  top: 1085px;
  width: 9px;
  height: 773px;
  border-radius: 5px;
  background-color: #9a9a9a;
}

/* composer */
.composer {
  height: 246px;
  flex-shrink: 0;
  padding: 30px 28px 0 41px;
  display: flex;
  align-items: flex-start;
  background-color: #0f0f0f;
}
.icon-plus {
  width: 60px;
  height: 60px;
  margin-top: 20px;
}
.input-box {
  width: 698px;
  height: 104px;
  margin-left: 41px;
  padding-right: 34px;
  display: flex;
  justify-content: flex-end;
  align-items: center;
  border-radius: 52px;
  background-color: #2a2a2a;
  border: 1px solid #3a3a3a;
}
.icon-sticker {
  width: 56px;
  height: 58px;
}
.icon-camera {
  width: 70px;
  height: 56px;
  margin: 22px 0 0 55px;
}
.mic-btn {
  width: 96px;
  height: 96px;
  margin: 3px 0 0 37px;
  border-radius: 50%;
  background-color: #fff;
  display: flex;
  justify-content: center;
  align-items: center;
}
.icon-mic {
  width: 38px;
  height: 56px;
}
```
